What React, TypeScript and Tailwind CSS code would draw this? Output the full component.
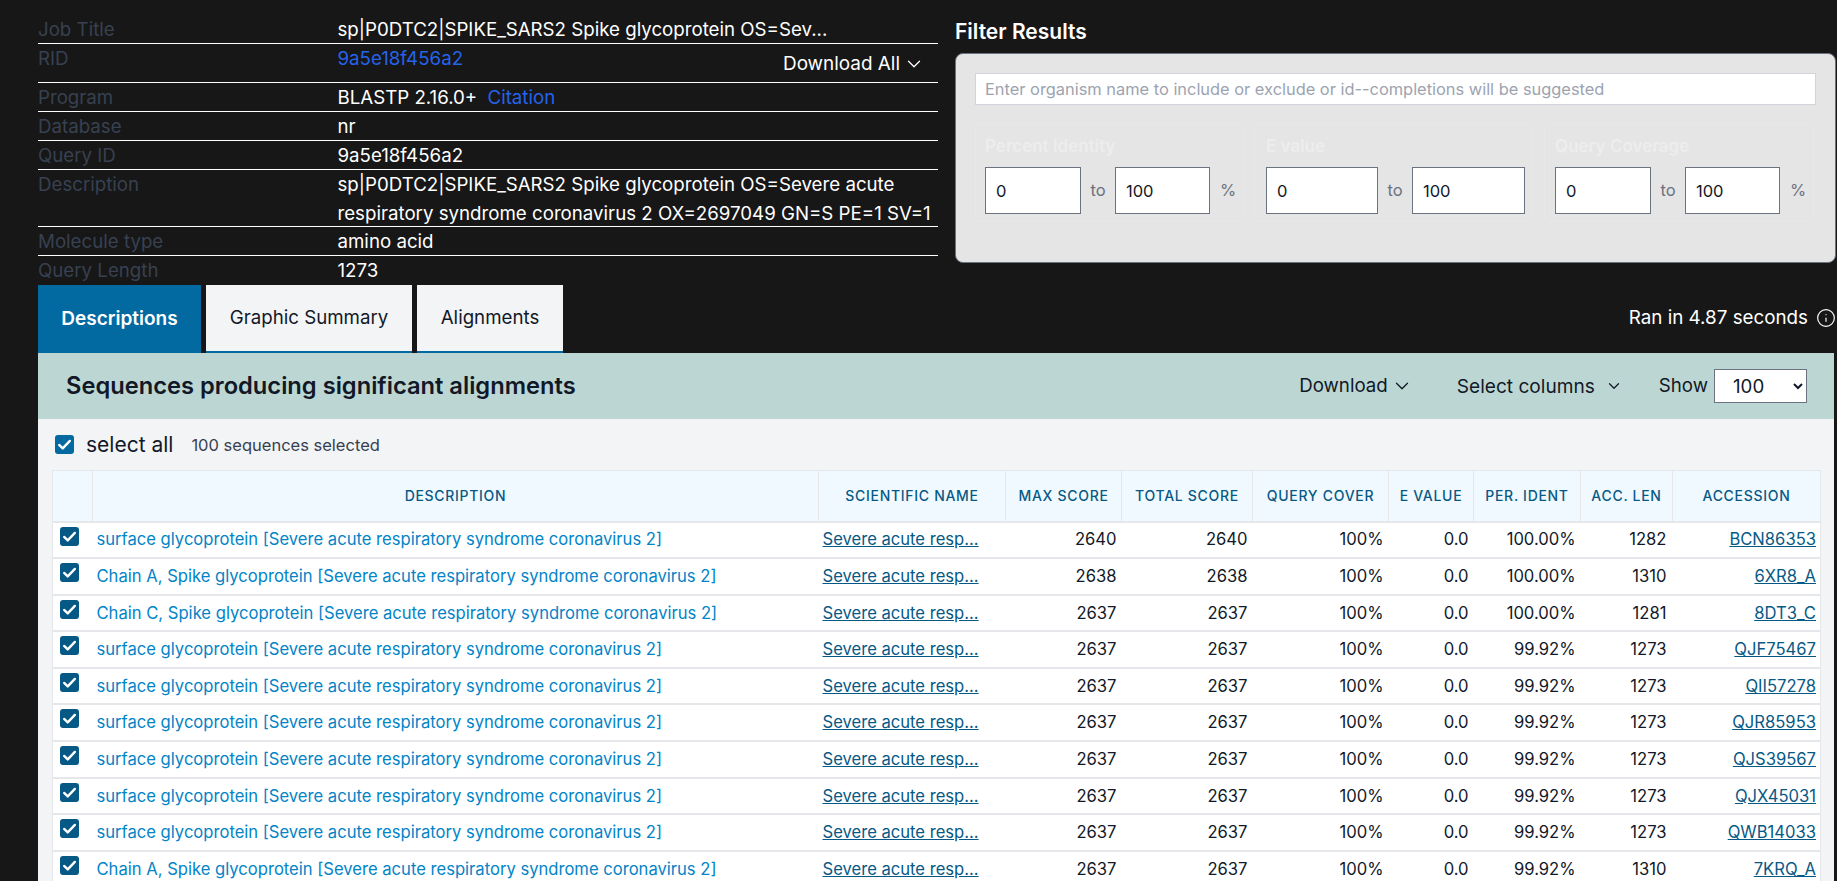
import { ChevronDown, Info } from "lucide-react";

const rows = [
  ["surface glycoprotein [Severe acute respiratory syndrome coronavirus 2]", "2640", "2640", "100.00%", "1282", "BCN86353"],
  ["Chain A, Spike glycoprotein [Severe acute respiratory syndrome coronavirus 2]", "2638", "2638", "100.00%", "1310", "6XR8_A"],
  ["Chain C, Spike glycoprotein [Severe acute respiratory syndrome coronavirus 2]", "2637", "2637", "100.00%", "1281", "8DT3_C"],
  ["surface glycoprotein [Severe acute respiratory syndrome coronavirus 2]", "2637", "2637", "99.92%", "1273", "QJF75467"],
  ["surface glycoprotein [Severe acute respiratory syndrome coronavirus 2]", "2637", "2637", "99.92%", "1273", "QII57278"],
  ["surface glycoprotein [Severe acute respiratory syndrome coronavirus 2]", "2637", "2637", "99.92%", "1273", "QJR85953"],
  ["surface glycoprotein [Severe acute respiratory syndrome coronavirus 2]", "2637", "2637", "99.92%", "1273", "QJS39567"],
  ["surface glycoprotein [Severe acute respiratory syndrome coronavirus 2]", "2637", "2637", "99.92%", "1273", "QJX45031"],
  ["surface glycoprotein [Severe acute respiratory syndrome coronavirus 2]", "2637", "2637", "99.92%", "1273", "QWB14033"],
  ["Chain A, Spike glycoprotein [Severe acute respiratory syndrome coronavirus 2]", "2637", "2637", "99.92%", "1310", "7KRQ_A"],
];

const columns = [
  { title: "Description", width: "w-[726px]" },
  { title: "Scientific Name", width: "w-[187px]" },
  { title: "Max Score", width: "w-[116px]" },
  { title: "Total Score", width: "w-[131px]" },
  { title: "Query Cover", width: "w-[136px]" },
  { title: "E value", width: "w-[85px]" },
  { title: "Per. Ident", width: "w-[107px]" },
  { title: "Acc. Len", width: "w-[92px]" },
  { title: "Accession", width: "w-[148px]" },
];

const Check = ({ className }: { className: string }) => (
  <span className={`flex items-center justify-center rounded-[3px] ${className}`}>
    <svg viewBox="0 0 16 16" className="w-full h-full" fill="none" stroke="white" strokeWidth="2" strokeLinecap="round" strokeLinejoin="round">
      <path d="M3.5 8.4l3 2.9 6-6.3" />
    </svg>
  </span>
);

const JobRow = ({ label, children, className = "h-[29px]" }: { label: string; children: React.ReactNode; className?: string }) => (
  <div className={`flex border-b border-white ${className}`}>
    <div className="w-[299.5px] shrink-0 text-[#374151] leading-[29px]">{label}</div>
    <div className="flex-1 text-white leading-[29px]">{children}</div>
  </div>
);

const RangeGroup = ({ title, unit, w1, w2, className }: { title: string; unit: string; w1: string; w2: string; className: string }) => (
  <div className={`border border-[#e8e8e8] rounded-[4px] h-[98px] pt-[9px] ${className}`}>
    <div className="font-semibold text-[17px] text-[#ededed] leading-[24px]">{title}</div>
    <div className="flex items-center mt-[9px] text-[#6b7280] text-[16.5px]">
      <input readOnly value="0" className={`h-[47px] ${w1} border border-[#6b7280] bg-white px-[10px] text-[#111827] outline-none`} />
      <span className="w-[34px] text-center">to</span>
      <input readOnly value="100" className={`h-[47px] ${w2} border border-[#6b7280] bg-white px-[10px] text-[#111827] outline-none`} />
      {unit && <span className="ml-[10px]">{unit}</span>}
    </div>
  </div>
);

const App = () => {
  return (
    <div className="h-[881px] overflow-hidden bg-[#171717] font-['Inter',sans-serif] text-[18.7px]">
      <div className="flex pl-[38px] pr-[3px] pt-[15px]">
        <div className="w-[900px] shrink-0">
          <JobRow label="Job Title">sp|P0DTC2|SPIKE_SARS2 Spike glycoprotein OS=Sev...</JobRow>
          <div className="flex border-b border-white h-[39px]">
            <div className="w-[299.5px] shrink-0 text-[#374151] leading-[29px]">RID</div>
            <div className="flex-1 text-[#2563eb] leading-[29px]">9a5e18f456a2</div>
            <div className="flex items-center gap-[3px] pr-[13px] pt-[2px] text-white text-[18.9px]">
              Download All <ChevronDown size={22} strokeWidth={1.4} />
            </div>
          </div>
          <JobRow label="Program">
            BLASTP 2.16.0+ <span className="ml-[5px] text-[#2563eb]">Citation</span>
          </JobRow>
          <JobRow label="Database">nr</JobRow>
          <JobRow label="Query ID">9a5e18f456a2</JobRow>
          <JobRow label="Description" className="h-[57px]">
            sp|P0DTC2|SPIKE_SARS2 Spike glycoprotein OS=Severe acute respiratory syndrome coronavirus 2 OX=2697049 GN=S PE=1 SV=1
          </JobRow>
          <JobRow label="Molecule type">amino acid</JobRow>
          <div className="flex h-[29px]">
            <div className="w-[299.5px] shrink-0 text-[#374151] leading-[29px]">Query Length</div>
            <div className="text-white leading-[29px]">1273</div>
          </div>
        </div>
        <div className="ml-[17px] flex-1">
          <h2 className="text-[21px] font-semibold text-white leading-[34px]">Filter Results</h2>
          <div className="mt-[4px] h-[210px] rounded-[8px] border border-[#6b7280] bg-[#e5e5e5] px-[19px] pt-[19px]">
            <input
              readOnly
              placeholder="Enter organism name to include or exclude or id--completions will be suggested"
              className="block w-[841px] h-[32px] border border-[#d1d5db] bg-white px-[9px] text-[16.4px] outline-none placeholder:text-[#9ca3af]"
            />
            <div className="flex mt-[19px]">
              <RangeGroup title="Percent Identity" unit="%" w1="w-[96px]" w2="w-[95px]" className="w-[270px] pl-[9px]" />
              <RangeGroup title="E value" unit="" w1="w-[112px]" w2="w-[113px]" className="w-[279px] ml-[9px] pl-[11px]" />
              <RangeGroup title="Query Coverage" unit="%" w1="w-[96px]" w2="w-[95px]" className="w-[270px] ml-[11px] pl-[10px]" />
            </div>
          </div>
        </div>
      </div>

      <div className="flex items-end justify-between pl-[38px] pr-[1px]">
        <div className="flex gap-[5px] h-[68px] items-stretch">
          <div className="w-[163px] bg-[#0369a1] flex items-center justify-center font-semibold text-[19px] text-white">Descriptions</div>
          <div className="w-[206px] bg-[#f3f4f6] border-b-2 border-[#0369a1] flex items-center justify-center text-[#111827]">Graphic Summary</div>
          <div className="w-[146px] bg-[#f3f4f6] border-b-2 border-[#0369a1] flex items-center justify-center text-[#111827]">Alignments</div>
        </div>
        <div className="flex items-center gap-[8px] h-[68px] pb-[2px] text-white text-[18.8px]">
          Ran in 4.87 seconds <Info size={20} strokeWidth={1.4} />
        </div>
      </div>

      <div className="ml-[38px] mr-[3px] bg-[#f3f4f6] h-[600px]">
        <div className="h-[66px] bg-[#bcd7d3] flex items-center pl-[28px] pr-[27px] text-[#111827]">
          <h3 className="text-[23.7px] font-semibold flex-1">Sequences producing significant alignments</h3>
          <div className="flex items-center gap-[3px] mr-[44px]">
            Download <ChevronDown size={22} strokeWidth={1.4} />
          </div>
          <div className="flex items-center gap-[10px] mr-[36px] text-[19.1px]">
            Select columns <ChevronDown size={18} strokeWidth={1.6} />
          </div>
          <span className="mr-[6px]">Show</span>
          <select className="w-[93px] h-[34px] border border-[#6b7280] bg-white pl-[14px] text-[#111827] outline-none">
            <option>100</option>
          </select>
        </div>

        <div className="flex items-center h-[51px] pl-[17px]">
          <Check className="w-[19px] h-[19px] bg-[#0369a1]" />
          <span className="ml-[12px] text-[21px] text-[#111827]">select all</span>
          <span className="ml-[18px] mt-[2px] text-[16.5px] text-[#374151]">100 sequences selected</span>
        </div>

        <table className="ml-[14px] table-fixed border-collapse w-[1768px] text-[16.6px] border border-[#e5e7eb]">
          <colgroup>
            <col className="w-[40px]" />
            {columns.map((c) => (
              <col key={c.title} className={c.width} />
            ))}
          </colgroup>
          <thead>
            <tr className="h-[51px] bg-[#f0f9ff] border-b-2 border-[#e5e7eb]">
              <th className="border-r border-[#e5e7eb]" />
              {columns.map((c) => (
                <th key={c.title} className="border-r border-[#e5e7eb] text-[14px] font-medium uppercase tracking-wider text-[#075985] text-center">
                  {c.title}
                </th>
              ))}
            </tr>
          </thead>
          <tbody className="bg-white">
            {rows.map((r) => (
              <tr key={r[5]} className="h-[36.6px] border-b-2 border-[#e5e7eb]">
                <td className="pl-[7px] align-top pt-[4px]">
                  <Check className="w-[19px] h-[19px] bg-[#075985]" />
                </td>
                <td className="pl-[4px] pr-[5px] text-[#0284c7] whitespace-nowrap">{r[0]}</td>
                <td className="pl-[4px] pr-[5px] text-[#075985] underline whitespace-nowrap">Severe acute resp...</td>
                <td className="px-[5px] text-right text-[#111827]">{r[1]}</td>
                <td className="px-[5px] text-right text-[#111827]">{r[2]}</td>
                <td className="px-[5px] text-right text-[#111827]">100%</td>
                <td className="px-[5px] text-right text-[#111827]">0.0</td>
                <td className="px-[5px] text-right text-[#111827]">{r[3]}</td>
                <td className="pl-[5px] pr-[6px] text-right text-[#111827]">{r[4]}</td>
                <td className="pl-[5px] pr-[4px] text-right text-[#075985] underline">{r[5]}</td>
              </tr>
            ))}
          </tbody>
        </table>
      </div>
    </div>
  );
};

export default App;
